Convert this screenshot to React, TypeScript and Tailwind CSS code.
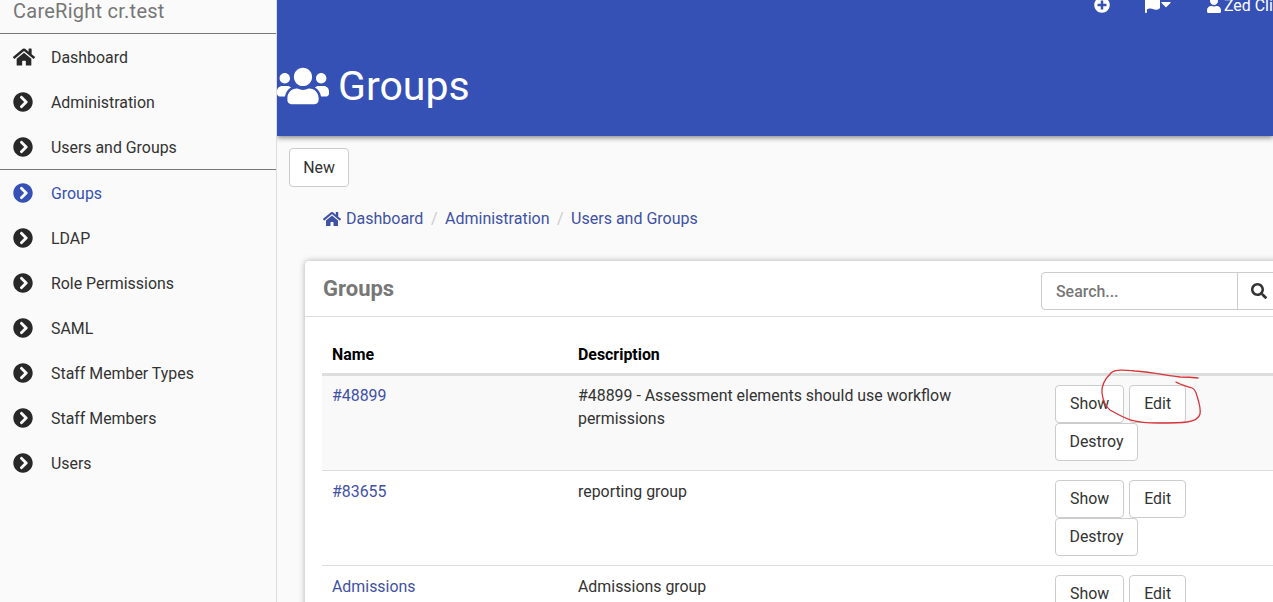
import React from 'react';
import { FaHome, FaChevronCircleRight, FaUsers, FaPlusCircle, FaFlag, FaUser, FaSearch, FaCaretDown } from 'react-icons/fa';

const navItems = ['Administration', 'Users and Groups'];
const subItems = ['LDAP', 'Role Permissions', 'SAML', 'Staff Member Types', 'Staff Members', 'Users'];

const NavItem: React.FC<{ label: string; active?: boolean }> = ({ label, active }) => (
  <div className={`flex h-[45px] items-center pl-[13px] ${active ? 'text-[#3551b5]' : 'text-[#333333]'}`}>
    <FaChevronCircleRight className={`mr-[18px] h-[20px] w-[20px] -translate-y-[1px] ${active ? 'text-[#3551b5]' : 'text-[#282828]'}`} />
    <span>{label}</span>
  </div>
);

const Btn: React.FC<{ children: React.ReactNode }> = ({ children }) => (
  <button className="h-[38px] rounded border border-[#cccccc] bg-white px-[14px] text-[15.9px] text-[#333333]">{children}</button>
);

const Actions = () => (
  <div className="flex w-[150px] flex-wrap gap-x-[5px]">
    <Btn>Show</Btn>
    <Btn>Edit</Btn>
    <button className="h-[38px] w-[83px] rounded border border-[#cccccc] bg-white text-[15.9px] text-[#333333]">Destroy</button>
  </div>
);

const rows = [
  { name: '#48899', desc: '#48899 - Assessment elements should use workflow permissions' },
  { name: '#83655', desc: 'reporting group' },
  { name: 'Admissions', desc: 'Admissions group' },
];

export default function App() {
  return (
    <div className="relative flex h-[602px] w-[1273px] overflow-hidden bg-[#fafafa] font-['Roboto',sans-serif] text-[15.9px] text-[#333333]">
      {/* Sidebar */}
      <aside className="w-[277px] shrink-0 border-r border-[#dddddd] bg-[#fafafa]">
        <div className="h-[34px] border-b border-[#777777] pl-[13px] text-[20px] leading-[22px] tracking-[0.25px] text-[#777777]">CareRight cr.test</div>
        <div className="mt-[1px] flex h-[45px] items-center pl-[13px]">
          <FaHome className="mr-[16px] h-[22px] w-[22px] -translate-y-[1px] text-[#282828]" />
          <span>Dashboard</span>
        </div>
        {navItems.map(n => <NavItem key={n} label={n} />)}
        <div className="mb-[1px] mt-[-1px] h-[1px] bg-[#777777]" />
        <NavItem label="Groups" active />
        {subItems.map(n => <NavItem key={n} label={n} />)}
      </aside>

      {/* Main */}
      <main className="min-w-0 flex-1 overflow-hidden">
        <header className="relative h-[136px] bg-[#3551b5] text-white shadow-[0_2px_5px_rgba(0,0,0,0.45)]">
          <div className="flex h-[10px] items-center pl-[817px]">
            <FaPlusCircle className="h-[16px] w-[16px] shrink-0" />
            <FaFlag className="ml-[34px] h-[16px] w-[16px] shrink-0" />
            <FaCaretDown className="h-[16px] w-[12px] shrink-0 -translate-y-[1px]" />
            <FaUser className="ml-[35px] h-[16px] w-[14px] shrink-0" />
            <span className="ml-[3px] translate-y-[1px] whitespace-nowrap">Zed Cli</span>
          </div>
          <div className="mt-[52px] flex items-center">
            <FaUsers className="h-[42px] w-[52px] shrink-0" />
            <h1 className="ml-[9px] text-[41px] leading-[48px]">Groups</h1>
          </div>
        </header>

        <div className="pl-[12px] pt-[12px]">
          <button className="h-[39px] w-[60px] rounded border border-[#cccccc] bg-white text-[#333333]">New</button>
        </div>

        <nav className="ml-[46px] mt-[20px] flex h-[24px] items-center whitespace-nowrap text-[16px] text-[#3f51a5]">
          <FaHome className="mr-[5px] h-[18px] w-[18px]" />
          <span>Dashboard</span>
          <span className="mx-[7.5px] text-[#cccccc]">/</span>
          <span>Administration</span>
          <span className="mx-[7.5px] text-[#cccccc]">/</span>
          <span>Users and Groups</span>
        </nav>

        <section className="ml-[28px] mt-[30px] w-[1010px] rounded bg-white shadow-[0_0_6px_rgba(0,0,0,0.3)]">
          <div className="flex h-[56px] items-center border-b border-[#dddddd] pl-[18px]">
            <h2 className="text-[22px] font-bold text-[#777777]">Groups</h2>
            <div className="ml-auto mr-[9px] mt-[5px] flex h-[38px] w-[265px] items-stretch">
              <div className="flex w-[197px] items-center rounded-l border border-[#cccccc] pl-[14px] pt-[1px] font-medium text-[#777777]">Search...</div>
              <div className="-ml-px flex flex-1 items-center border border-[#cccccc] pl-[13px] text-[#333333]">
                <FaSearch className="h-[16px] w-[16px]" />
              </div>
            </div>
          </div>
          <div className="px-[17px] pt-[21px]">
            <table className="w-[976px] table-fixed border-collapse text-left">
              <colgroup>
                <col className="w-[246px]" />
                <col className="w-[477px]" />
                <col />
              </colgroup>
              <thead>
                <tr className="border-b-[3px] border-[#dddddd]">
                  <th className="h-[36px] px-[10px] font-bold text-black">Name</th>
                  <th className="px-[10px] font-bold text-black">Description</th>
                  <th />
                </tr>
              </thead>
              <tbody>
                {rows.map((r, i) => (
                  <tr key={r.name} className={`border-b border-[#dddddd] ${i === 0 ? 'bg-[#f9f9f9]' : ''}`}>
                    <td className={`px-[10px] align-top leading-[23px] text-[#3f51a5] ${i === 0 ? 'pt-[8px]' : 'pt-[9px]'}`}>{r.name}</td>
                    <td className={`pl-[10px] pr-[80px] align-top leading-[23px] ${i === 0 ? 'pt-[8px]' : 'pt-[9px]'}`}>{r.desc}</td>
                    <td className="px-[10px] pb-[9px] pt-[9px] align-top"><Actions /></td>
                  </tr>
                ))}
              </tbody>
            </table>
          </div>
        </section>
      </main>

      {/* Hand drawn annotation */}
      <svg className="pointer-events-none absolute left-0 top-0" width="1273" height="602" fill="none">
        <path
          d="M1198 378 C1190 377 1185 377 1180 377 C1165 375 1150 372 1135 371 C1125 370 1115 369 1111 373 C1105 379 1101 386 1102 393 C1103 401 1105 406 1110 410 C1117 414 1124 418 1131 420 C1142 423 1150 423 1158 423 C1170 423 1180 423 1187 422 C1194 421 1199 418 1200 414 C1201 408 1199 402 1197 396 C1196 392 1195 389 1192 388 C1186 386 1181 385 1176 382"
          stroke="#d9343a"
          strokeWidth="1.3"
          strokeLinecap="round"
        />
      </svg>
    </div>
  );
}
